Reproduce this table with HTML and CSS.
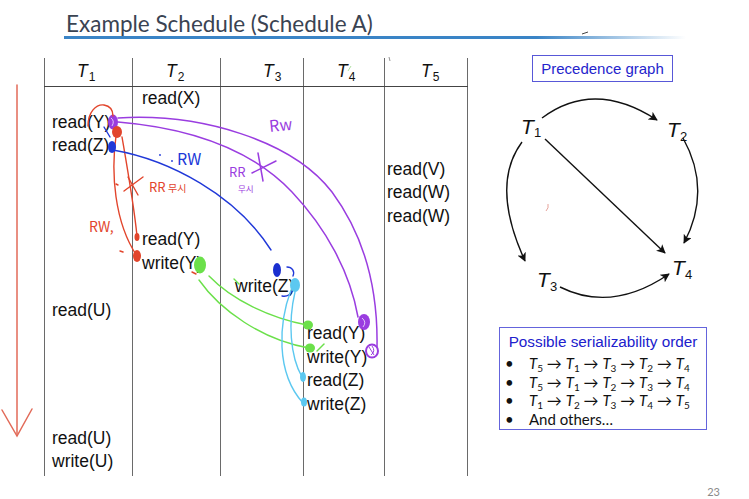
FILE: index.html
```html
<!DOCTYPE html>
<html lang="en">
<head>
<meta charset="utf-8">
<title>Example Schedule (Schedule A)</title>
<link rel="stylesheet" href="styles.css">
</head>
<body>
<div class="slide">
  <header class="head">
    <h1 class="title">Example Schedule (Schedule A)</h1>
    <div class="rule"></div>
  </header>

  <main class="main">
    <div class="schedule">
      <div class="col c1"></div>
      <div class="col c2"></div>
      <div class="col c3"></div>
      <div class="col c4"></div>
      <div class="col c5"></div>

      <div class="hd c1">T<sub>1</sub></div>
      <div class="hd c2">T<sub>2</sub></div>
      <div class="hd c3">T<sub>3</sub></div>
      <div class="hd c4">T<sub>4</sub></div>
      <div class="hd c5">T<sub>5</sub></div>

      <div class="op c2 g2">read(X)</div>
      <div class="op c1 g3">read(Y)</div>
      <div class="op c1 g4">read(Z)</div>
      <div class="op c5 g5">read(V)</div>
      <div class="op c5 g6">read(W)</div>
      <div class="op c5 g7">read(W)</div>
      <div class="op c2 g8">read(Y)</div>
      <div class="op c2 g9">write(Y)</div>
      <div class="op c3 g10">write(Z)</div>
      <div class="op c1 g11">read(U)</div>
      <div class="op c4 g12">read(Y)</div>
      <div class="op c4 g13">write(Y)</div>
      <div class="op c4 g14">read(Z)</div>
      <div class="op c4 g15">write(Z)</div>
      <div class="op c1 g17">read(U)</div>
      <div class="op c1 g18">write(U)</div>
    </div>

    <aside class="side">
      <div class="prec">Precedence graph</div>
      <svg class="graph" viewBox="499 82 210 223" width="210" height="223">
        <defs>
          <marker id="ah" viewBox="0 0 10 10" refX="9" refY="5" markerWidth="9" markerHeight="9" markerUnits="userSpaceOnUse" orient="auto">
            <path d="M0,0 L10,5 L0,10 L2.5,5 Z" fill="#111"/>
          </marker>
        </defs>
        <g fill="none" stroke="#111" stroke-width="1.4">
          <path d="M542,118 Q594,79 657,120" marker-end="url(#ah)"/>
          <path d="M522,142 Q490,185 525,261" marker-end="url(#ah)"/>
          <path d="M683,138 Q712,190 684,243" marker-end="url(#ah)"/>
          <path d="M545,139 L665,253" marker-end="url(#ah)"/>
          <path d="M560,287 Q612,313 669,274" marker-end="url(#ah)"/>
        </g>
        <path d="M548,204 Q549,208 546,211" fill="none" stroke="#e08a80" stroke-width="0.8"/>
        <g class="node">
          <text x="521" y="134" class="nt">T</text><text x="534" y="137" class="ns">1</text>
          <text x="667" y="137" class="nt">T</text><text x="680" y="141" class="ns">2</text>
          <text x="537" y="287" class="nt">T</text><text x="550" y="291" class="ns">3</text>
          <text x="672" y="275" class="nt">T</text><text x="685" y="279" class="ns">4</text>
        </g>
      </svg>
      <div class="serial">
        <div class="serial-title">Possible serializability order</div>
        <ul class="orders">
          <li><span class="bullet">•</span><span><i>T</i><sub>5</sub> → <i>T</i><sub>1</sub> → <i>T</i><sub>3</sub> → <i>T</i><sub>2</sub> → <i>T</i><sub>4</sub></span></li>
          <li><span class="bullet">•</span><span><i>T</i><sub>5</sub> → <i>T</i><sub>1</sub> → <i>T</i><sub>2</sub> → <i>T</i><sub>3</sub> → <i>T</i><sub>4</sub></span></li>
          <li><span class="bullet">•</span><span><i>T</i><sub>1</sub> → <i>T</i><sub>2</sub> → <i>T</i><sub>3</sub> → <i>T</i><sub>4</sub> → <i>T</i><sub>5</sub></span></li>
          <li><span class="bullet">•</span><span>And others…</span></li>
        </ul>
      </div>
    </aside>
  </main>

  <footer class="pnum">23</footer>

  <svg class="ink" viewBox="0 0 749 499" width="749" height="499">
    <!-- time arrow -->
    <g fill="none" stroke="#e26a58" stroke-width="1.5" stroke-linecap="round">
      <path d="M17,85 L17,434"/>
      <path d="M2,410 L17,436 L32,409"/>
    </g>
    <!-- stray marks -->
    <path d="M582,34 L588,32" stroke="#444" stroke-width="1" fill="none"/>
    <path d="M389,57 L390,61" stroke="#777" stroke-width="0.8" fill="none"/>
    <path d="M348,71 L351,66" stroke="#9ad88a" stroke-width="0.8" fill="none"/>

    <!-- purple: T1 read(Y) -> T4 -->
    <g fill="none" stroke="#9a3de0" stroke-width="1.5" stroke-linecap="round">
      <path d="M118,118 C200,113 292,140 332,192 C366,238 378,292 377,347"/>
      <path d="M118,122 C190,128 252,150 292,192 C326,228 350,272 358,317"/>
      <path d="M258,153 L263,181"/>
      <path d="M252,173 L276,161"/>
    </g>
    <g fill="#9a3de0">
      <ellipse cx="113" cy="122" rx="5" ry="7.5"/>
      <ellipse cx="364" cy="322" rx="6" ry="8"/>
    </g>
    <g fill="none" stroke="#fff" stroke-width="0.9" opacity="0.8">
      <path d="M111,118 Q115,121 112,126"/>
      <path d="M362,318 Q367,322 363,327"/>
    </g>
    <ellipse cx="372" cy="351" rx="6" ry="6.5" fill="none" stroke="#9a3de0" stroke-width="2"/>
    <path d="M369,347 L374,355 M372,346 Q376,351 371,355" fill="none" stroke="#9a3de0" stroke-width="1"/>
    <text x="269" y="131" class="hw hw-p hw-l" transform="rotate(-6 280 124)">Rw</text>
    <text x="229" y="177" class="hw hw-p">RR</text>
    <text x="238" y="192" class="hw hw-p hw-k">무시</text>

    <!-- red -->
    <g fill="none" stroke="#e2452c" stroke-width="1.4" stroke-linecap="round">
      <path d="M88,126 C88,112 96,104 104,105 C110,106 113,110 113,116"/>
      <path d="M116,136 C111,172 114,222 137,256"/>
      <path d="M122,137 C128,172 134,206 137,236"/>
      <path d="M128,177 L138,195"/>
      <path d="M124,191 L143,177"/>
      <path d="M120,251 L123,252"/>
      <path d="M116,184 L118,185"/>
      <path d="M192,272 L196,274"/>
    </g>
    <g fill="#e2452c">
      <ellipse cx="117" cy="132" rx="5" ry="6"/>
      <ellipse cx="137" cy="237" rx="2.5" ry="4"/>
      <ellipse cx="137" cy="256" rx="4" ry="6"/>
    </g>
    <text x="149" y="192" class="hw hw-r">RR</text>
    <text x="168" y="192" class="hw hw-r hw-k2">무시</text>
    <text x="89" y="232" class="hw hw-r hw-m">RW,</text>

    <!-- blue -->
    <g fill="none" stroke="#2038d8" stroke-width="1.4" stroke-linecap="round">
      <path d="M113,150 C170,160 236,195 271,250"/>
      <path d="M104,127 L110,137"/>
      <path d="M287,267 C292,267 295,271 293,276"/>
      <path d="M282,296 C287,297 290,295 292,291"/>
    </g>
    <ellipse cx="112" cy="147" rx="4" ry="6" fill="#2038d8"/>
    <ellipse cx="277" cy="270" rx="4" ry="7" fill="#1a2fd0"/>
    <circle cx="160" cy="155" r="0.9" fill="#2038d8"/>
    <circle cx="172" cy="161" r="0.9" fill="#2038d8"/>
    <text x="177" y="165" class="hw hw-b hw-l">RW</text>

    <!-- green -->
    <g fill="none" stroke="#6be04a" stroke-width="1.4" stroke-linecap="round">
      <path d="M209,276 C232,300 270,318 307,325"/>
      <path d="M199,280 C220,310 262,340 309,348"/>
      <path d="M234,279 L239,284"/>
      <path d="M317,351 L324,344"/>
    </g>
    <g fill="#6be04a">
      <ellipse cx="200" cy="265" rx="6" ry="8.5"/>
      <ellipse cx="308" cy="325" rx="5" ry="4.5"/>
      <ellipse cx="310" cy="348" rx="5" ry="4.5"/>
    </g>

    <!-- cyan -->
    <g fill="none" stroke="#5cc8f0" stroke-width="1.4" stroke-linecap="round">
      <path d="M291,290 C279,322 275,372 303,403"/>
      <path d="M295,292 C288,322 290,356 302,377"/>
    </g>
    <g fill="#5cc8f0">
      <ellipse cx="295" cy="285" rx="5" ry="7"/>
      <ellipse cx="303" cy="377" rx="3" ry="5"/>
      <ellipse cx="304" cy="402" rx="3" ry="4.5"/>
    </g>
  </svg>
</div>
</body>
</html>
```

FILE: styles.css
```css
* { box-sizing: border-box; }

html, body {
  margin: 0;
  padding: 0;
  background: #ffffff;
}

body {
  width: 749px;
  height: 499px;
  overflow: hidden;
  font-family: "Liberation Sans", Arial, sans-serif;
  color: #111;
}

.slide {
  position: relative;
  width: 749px;
  height: 499px;
}

/* ---------- heading ---------- */
.head {
  height: 58px;
  padding-top: 11px;
}

.title {
  margin: 0 0 0 66px;
  font-family: "Lato", "Open Sans", sans-serif;
  font-weight: 400;
  font-size: 22.5px;
  line-height: 26px;
  color: #3a4352;
}

.rule {
  margin: -1px 0 0 64px;
  width: 622px;
  height: 2.5px;
  background: linear-gradient(to right, #3a84c6 0%, #3a84c6 76%, rgba(90, 160, 220, 0) 100%);
}

/* ---------- body ---------- */
.main {
  display: flex;
  align-items: flex-start;
}

.schedule {
  margin-left: 44px;
  display: grid;
  grid-template-columns: 88px 88px 83px 81px 84px;
  grid-template-rows: 29px repeat(14, 23.5px) 10.5px 23.5px 23.5px 2px;
  font-size: 17.5px;
}

.col {
  grid-row: 1 / -1;
  border-left: 1px solid #6a6a6a;
}
.col.c5 { border-right: 1px solid #6a6a6a; }

.c1 { grid-column: 1; }
.c2 { grid-column: 2; }
.c3 { grid-column: 3; }
.c4 { grid-column: 4; }
.c5 { grid-column: 5; }

.hd {
  grid-row: 1;
  border-bottom: 1px solid #444;
  font-style: italic;
  font-size: 17.5px;
  line-height: 20px;
  padding-top: 3px;
}
.hd sub {
  font-style: normal;
  font-size: 12px;
  vertical-align: -4px;
  line-height: 0;
  margin-left: 1px;
}
.hd.c1 { padding-left: 33px; }
.hd.c2 { padding-left: 34px; }
.hd.c3 { padding-left: 43px; }
.hd.c4 { padding-left: 34px; }
.hd.c5 { padding-left: 37px; }

.op {
  line-height: 23.5px;
  white-space: nowrap;
}
.op.c1 { padding-left: 8px; }
.op.c2 { padding-left: 10px; }
.op.c3 { padding-left: 15px; }
.op.c4 { padding-left: 4px; }
.op.c5 { padding-left: 3px; }

.g2 { grid-row: 2; }
.g3 { grid-row: 3; }
.g4 { grid-row: 4; }
.g5 { grid-row: 5; }
.g6 { grid-row: 6; }
.g7 { grid-row: 7; }
.g8 { grid-row: 8; }
.g9 { grid-row: 9; }
.g10 { grid-row: 10; }
.g11 { grid-row: 11; }
.g12 { grid-row: 12; }
.g13 { grid-row: 13; }
.g14 { grid-row: 14; }
.g15 { grid-row: 15; }
.g17 { grid-row: 17; }
.g18 { grid-row: 18; }

/* ---------- right side ---------- */
.side {
  margin-left: 31px;
  margin-top: -3px;
  width: 210px;
  display: flex;
  flex-direction: column;
}

.prec {
  margin-left: 33px;
  width: 141px;
  height: 27px;
  border: 1.5px solid #5858d8;
  color: #2424cc;
  font-size: 15px;
  display: flex;
  align-items: center;
  justify-content: center;
}

.graph {
  display: block;
  width: 210px;
  height: 223px;
}

.nt {
  font-family: "Liberation Sans", Arial, sans-serif;
  font-style: italic;
  font-size: 21px;
  fill: #111;
}
.ns {
  font-family: "Liberation Sans", Arial, sans-serif;
  font-size: 13px;
  fill: #111;
}

.serial {
  margin-top: 22px;
  width: 208px;
  height: 103px;
  border: 1.5px solid #6464dc;
  padding-top: 3.5px;
}

.serial-title {
  text-align: center;
  color: #2020cc;
  font-size: 15.3px;
  line-height: 20px;
}

.orders {
  list-style: none;
  margin: 2.75px 0 0;
  padding: 0;
  font-family: "Lato", "DejaVu Sans", sans-serif;
  font-size: 15px;
  line-height: 18.5px;
  color: #111;
}
.orders li { display: flex; white-space: nowrap; }
.bullet {
  width: 29px;
  padding-left: 5px;
}
.orders sub {
  font-size: 10px;
  vertical-align: -3px;
  line-height: 0;
}

/* ---------- footer ---------- */
.pnum {
  margin-top: 9px;
  padding-right: 29px;
  text-align: right;
  font-family: "Lato", sans-serif;
  font-size: 11px;
  line-height: 14px;
  color: #8a8a8a;
}

/* ---------- handwritten ink overlay ---------- */
.ink {
  position: absolute;
  left: 0;
  top: 0;
  pointer-events: none;
}

.hw {
  font-family: "Noto Sans CJK KR", "Noto Sans", sans-serif;
  font-weight: 400;
  font-size: 13px;
}
.hw-l { font-size: 16px; }
.hw-m { font-size: 14px; }
.hw-k { font-size: 8.5px; }
.hw-k2 { font-size: 10px; }
.hw-p { fill: #9a3de0; }
.hw-r { fill: #e2452c; }
.hw-b { fill: #2038d8; }
```
